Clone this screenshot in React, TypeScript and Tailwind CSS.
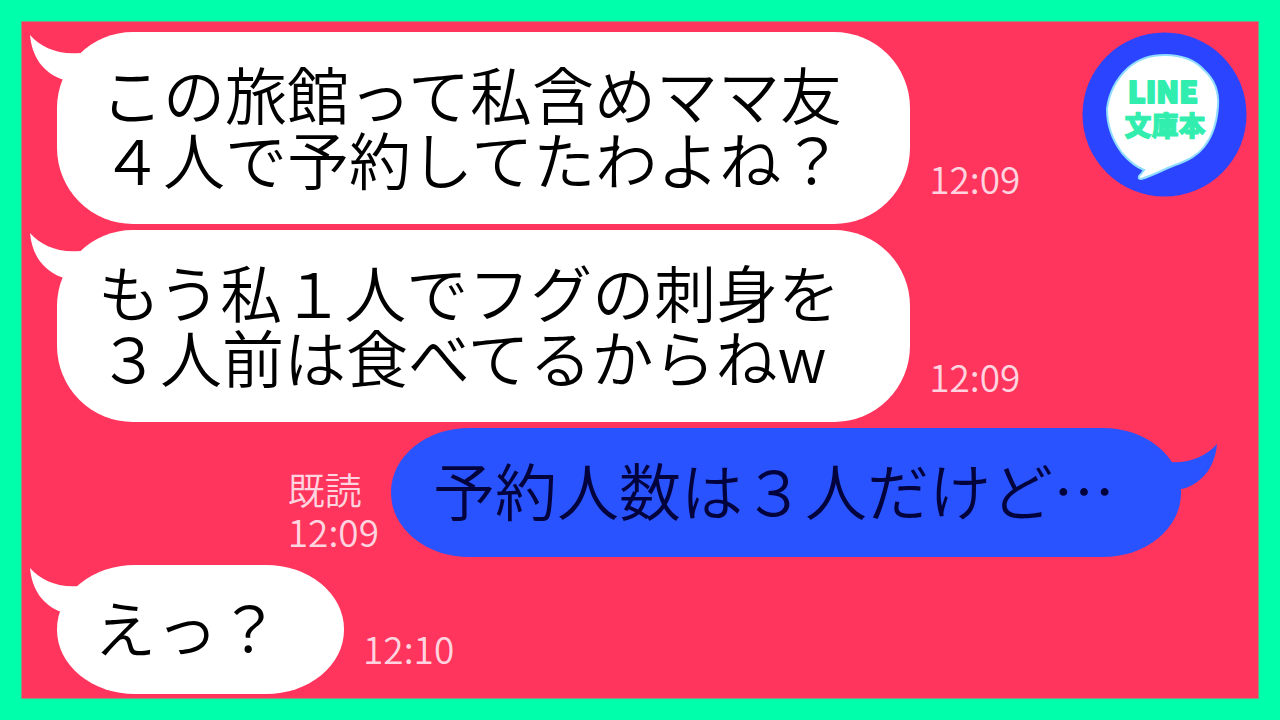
import clsx from "clsx";

type Message = {
  lines: string[];
  time: string;
  own?: boolean;
  read?: boolean;
  pad: string;
  gap?: string;
};

const messages: Message[] = [
  {
    lines: ["この旅館って私含めママ友", "４人で予約してたわよね？"],
    time: "12:09",
    pad: "pl-11 pr-[67px]",
    gap: "mb-1.5",
  },
  {
    lines: ["もう私１人でフグの刺身を", "３人前は食べてるからねw"],
    time: "12:09",
    pad: "pl-[41px] pr-[70px]",
    gap: "mb-1.5",
  },
  {
    lines: ["予約人数は３人だけど…"],
    time: "12:09",
    own: true,
    read: true,
    pad: "pl-[42px] pr-[66px]",
    gap: "mb-2",
  },
  {
    lines: ["えっ？"],
    time: "12:10",
    pad: "pl-[37px] pr-16",
  },
];

function Tail({ own }: { own?: boolean }) {
  return (
    <svg
      viewBox="0 0 60 48"
      aria-hidden
      className={clsx(
        "absolute h-12 w-[60px]",
        own ? "-right-9 top-4 -scale-x-100 fill-[#2953ff]" : "-left-[27px] top-[3px] fill-white"
      )}
    >
      <path d="M0 0 C11 12 27 20 50 18 L60 24 L50 48 L31 44 C13 37 2 22 0 0 Z" />
    </svg>
  );
}

function Bubble({ message }: { message: Message }) {
  const { lines, own, pad } = message;
  return (
    <div
      className={clsx(
        "relative whitespace-nowrap pt-[29px] text-[62px] leading-[65px]",
        lines.length > 1 ? "rounded-[76px] pb-[33px]" : "rounded-[78px/64px] pb-[35px]",
        own ? "bg-[#2953ff] text-[#02023c]" : "bg-white text-black",
        pad
      )}
    >
      <Tail own={own} />
      {lines.map((line) => (
        <p key={line} className="relative">
          {line}
        </p>
      ))}
    </div>
  );
}

function Logo() {
  return (
    <svg
      viewBox="0 0 165 165"
      role="img"
      aria-label="LINE 文庫本"
      className="absolute right-[11px] top-2.5 size-[165px]"
    >
      <circle cx="82.5" cy="82.5" r="82" fill="#2b44ff" />
      <path
        d="M83 23 C99 23 113 28 122 38 C132 47 137 60 136 74 C135 91 130 105 122 115 C115 124 106 128 96 132 C84 136 73 143 59 147 C56 147 56 144 59 142 L62 138 C54 135 47 129 40 121 C31 109 25 94 25 77 C27 61 34 47 46 36 C56 27 68 23 83 23 Z"
        fill="#fff"
        stroke="#8fdcff"
        strokeWidth="2"
      />
      <g
        fill="#32eeae"
        stroke="#32eeae"
        strokeLinejoin="round"
        textAnchor="middle"
        className="font-black"
      >
        <text x="81" y="71" fontSize="30" strokeWidth="2">
          LINE
        </text>
        <text x="83" y="104" fontSize="27" strokeWidth="1">
          文庫本
        </text>
      </g>
    </svg>
  );
}

export default function App() {
  return (
    <main
      lang="ja"
      className="min-h-screen overflow-hidden border-[21px] border-[#00ffaa] bg-[#ff355d] font-['Noto_Sans_CJK_JP',sans-serif] font-[350]"
    >
      <div className="relative min-h-[calc(100vh-42px)] border border-[#8c9a7a] pb-1 pl-[35px] pr-[77px] pt-2.5">
        <ul className="flex flex-col">
          {messages.map((m, i) => (
            <li
              key={i}
              className={clsx("flex items-end", m.own && "flex-row-reverse", m.gap)}
            >
              <Bubble message={m} />
              <div
                className={clsx(
                  "text-[37px] leading-[42px] text-[#ffd3df]",
                  m.own ? "mr-3 pb-[5px]" : "ml-[19px] pb-[25px]"
                )}
              >
                {m.read && <p>既読</p>}
                <time className="block">{m.time}</time>
              </div>
            </li>
          ))}
        </ul>
        <Logo />
      </div>
    </main>
  );
}
